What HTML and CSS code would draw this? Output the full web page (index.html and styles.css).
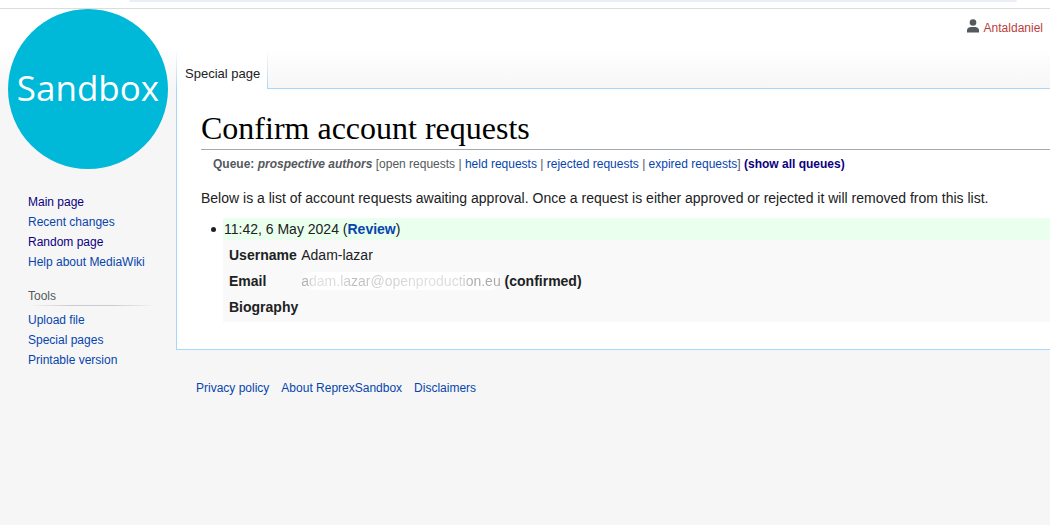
FILE: index.html
```html
<!DOCTYPE html>
<html lang="en">
<head>
<meta charset="utf-8">
<title>Confirm account requests</title>
<link rel="stylesheet" href="styles.css">
</head>
<body>
<div class="browser-edge"><div class="address-bar"></div></div>
<div class="page">
  <aside class="sidebar">
    <a class="logo" href="#">Sandbox</a>
    <nav class="portal" aria-label="Navigation">
      <ul>
        <li><a class="visited" href="#">Main page</a></li>
        <li><a href="#">Recent changes</a></li>
        <li><a class="visited" href="#">Random page</a></li>
        <li><a href="#">Help about MediaWiki</a></li>
      </ul>
    </nav>
    <nav class="portal" aria-labelledby="tools">
      <h2 id="tools">Tools</h2>
      <ul>
        <li><a href="#">Upload file</a></li>
        <li><a href="#">Special pages</a></li>
        <li><a href="#">Printable version</a></li>
      </ul>
    </nav>
  </aside>
  <div class="column">
    <div class="personal">
      <svg class="user-icon" viewBox="0 0 14 14" aria-hidden="true"><circle cx="7" cy="3.5" r="3.3"/><path d="M1 13.5v-2.200C1 8.900 3.500 8 4.800 8h4.400C10.500 8 13 8.900 13 11.300v2.200z"/></svg>
      <a class="new" href="#">Antaldaniel</a>
    </div>
    <div class="tabs">
      <a class="tab" href="#">Special page</a>
      <div class="tab-fill"></div>
    </div>
    <main class="content">
      <h1>Confirm account requests</h1>
      <div class="queue"><b>Queue: <i>prospective authors</i></b> [open requests | <a href="#">held requests</a> | <a href="#">rejected requests</a> | <a href="#">expired requests</a>] <a class="visited" href="#"><b>(show all queues)</b></a></div>
      <p>Below is a list of account requests awaiting approval. Once a request is either approved or rejected it will removed from this list.</p>
      <ul class="requests">
        <li>
          <div>
            <div class="request-head">11:42, 6 May 2024 (<a href="#"><b>Review</b></a>)</div>
            <table class="request">
              <tr><th scope="row">Username</th><td>Adam-lazar</td></tr>
              <tr><th scope="row">Email</th><td><span class="email"><span class="email-text">adam.lazar@openproduction.eu</span></span> <b>(confirmed)</b></td></tr>
              <tr><th scope="row">Biography</th><td></td></tr>
            </table>
          </div>
        </li>
      </ul>
    </main>
    <footer class="footer">
      <a href="#">Privacy policy</a>
      <a href="#">About ReprexSandbox</a>
      <a href="#">Disclaimers</a>
    </footer>
  </div>
</div>
</body>
</html>
```
FILE: styles.css
```css
* { box-sizing: border-box; }
body {
  margin: 0;
  background: #f6f6f6;
  color: #202122;
  font: 14px/22px "Liberation Sans", Arial, sans-serif;
}
a { color: #0645ad; text-decoration: none; }
a.visited { color: #0b0080; }
a.new { color: #ba4040; }
ul { list-style: none; margin: 0; padding: 0; }

.browser-edge {
  height: 9px;
  padding: 0 33px 0 129px;
  background: #fff;
  border-bottom: 1px solid #dadce0;
}
.address-bar { height: 2px; background: #e9eef9; border-radius: 0 0 4px 4px; }

.page {
  display: grid;
  grid-template-columns: 176px 1fr;
  background: linear-gradient(#fff 50%, #f6f6f6) 0 0 / 100% 80px no-repeat;
}

.sidebar { padding-left: 8px; font-size: 12px; line-height: 20px; }
.logo {
  display: flex;
  align-items: center;
  justify-content: center;
  width: 160px;
  height: 160px;
  padding-bottom: 2px;
  border-radius: 50%;
  background: #00b8d8;
  color: #fff;
  font: 500 35px/50px "Open Sans", "Noto Sans", sans-serif;
}
.portal { padding: 23px 20px 0 20px; }
.portal + .portal { padding-top: 14px; }
.portal h2 {
  margin: 0 0 4px;
  color: #54595d;
  font-size: 12px;
  font-weight: normal;
  background: linear-gradient(to right, transparent, #c8ccd1 33%, #c8ccd1 66%, transparent) bottom / 100% 1px no-repeat;
}

.column { min-width: 0; }
.personal {
  display: flex;
  justify-content: flex-end;
  align-items: center;
  gap: 4px;
  height: 40px;
  padding: 0 7px 2px 0;
  font-size: 12px;
}
.user-icon { width: 14px; height: 14px; margin-bottom: 4px; fill: #54595d; }
.tabs { display: flex; height: 40px; }
.tab {
  padding: 14px 8px 0 9px;
  color: #202122;
  font-size: 13px;
  background:
    linear-gradient(#fff, #a7d7f9) left / 1px 100% no-repeat,
    linear-gradient(#fff, #a7d7f9) right / 1px 100% no-repeat,
    #fff;
}
.tab-fill { flex: 1; border-bottom: 1px solid #a7d7f9; }

.content {
  padding: 21px 0 27px 24px;
  background: #fff;
  border: solid #a7d7f9;
  border-width: 0 0 1px 1px;
}
h1 {
  margin: 0;
  padding-bottom: 2px;
  border-bottom: 1px solid #a2a9b1;
  color: #000;
  font: 32px/37px Georgia, "Liberation Serif", serif;
}
.queue { padding: 4px 12px 0; font-size: 12px; line-height: 20px; color: #54595d; }
p { margin: 13px 0 9px; }
.requests li { display: grid; grid-template-columns: 22px 1fr; }
.requests li::before {
  content: "";
  width: 5px;
  height: 5px;
  margin: 9px 0 0 10px;
  border-radius: 50%;
  background: #202122;
}
.request-head { padding-left: 1px; background: #eaffee; }
.request { width: 100%; padding: 1px 2px; border-spacing: 2px; background: #f9f9f9; }
.request th, .request td { padding: 1px 0 1px 2px; text-align: left; }
.request td { padding-left: 1px; }
.request th { width: 70px; }
.email {
  padding: 1px 0;
  border-radius: 8px;
  background: linear-gradient(to right, transparent, #fff 8%, #fff 95%, transparent);
}
.email-text {
  color: transparent;
  background: linear-gradient(to right, #b0b0b0 3%, #e0e0e0 6%, #d8d8d8 20%, #bcbcbc 27%, #cfcfcf 40%, #e0e0e0 65%, #d6d6d6 80%, #a8a8a8 86%);
  -webkit-background-clip: text;
  background-clip: text;
}

.footer { display: flex; gap: 12px; padding: 27px 20px 20px; font-size: 12px; }
```
